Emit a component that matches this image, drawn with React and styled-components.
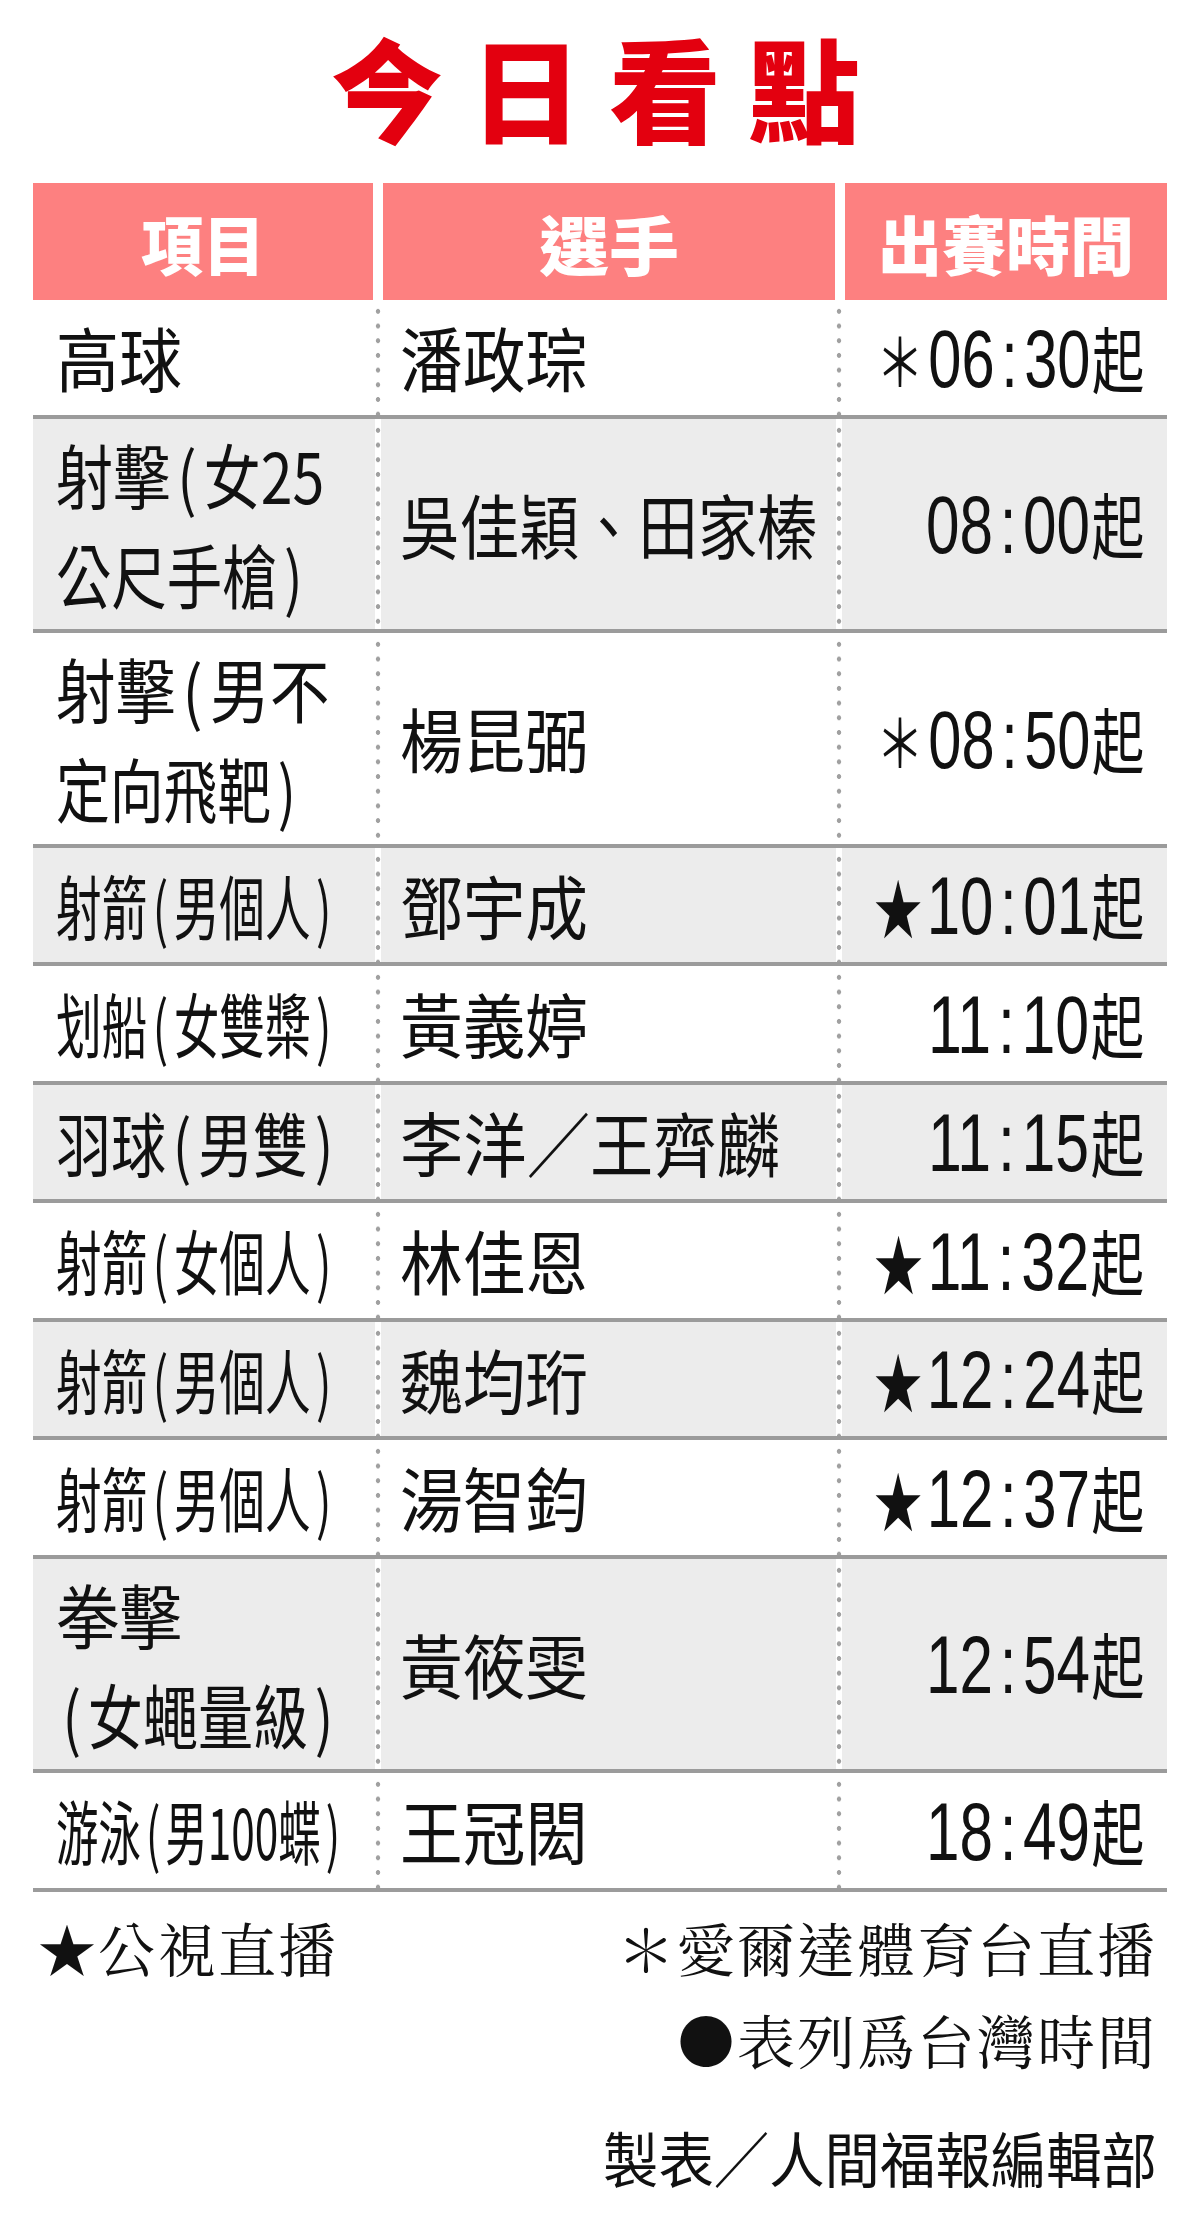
import React, { useLayoutEffect, useRef, useState } from 'react';
import styled, { createGlobalStyle } from 'styled-components';

const SANS = `"Noto Sans CJK TC", "Noto Sans CJK SC", sans-serif`;
const DIGITS = `"Liberation Sans", "Noto Sans CJK TC", "Noto Sans CJK SC", sans-serif`;
const KAI = `"AR PL UKai TW", "Noto Serif CJK TC", "Noto Sans CJK TC", serif`;

const GlobalStyle = createGlobalStyle`
  html, body {
    margin: 0;
    padding: 0;
    background: #fff;
  }
  body {
    font-family: ${SANS};
    color: #111;
  }
`;

const Page = styled.div`
  width: 1200px;
  min-height: 2216px;
  padding: 30px 33px 0;
  box-sizing: border-box;
  background: #fff;
`;

const Title = styled.h1`
  margin: 0 0 41px;
  padding-left: 18px;
  height: 112px;
  font-size: 112px;
  line-height: 112px;
  font-weight: 900;
  letter-spacing: 27px;
  text-align: center;
  color: #e3000f;
`;

const HeadRow = styled.div`
  display: grid;
  grid-template-columns: 340px 452px 322px;
  column-gap: 10px;
  height: 117px;
`;

const HeadCell = styled.div`
  display: flex;
  align-items: center;
  justify-content: center;
  background: #fd8080;
  color: #fff;
  font-size: 64px;
  line-height: 1;
  font-weight: 900;
`;

const Row = styled.div`
  display: grid;
  grid-template-columns: 342px 6px 455px 6px 325px;
  height: ${p => (p.$tall ? 210.5 : 114.5)}px;
  border-bottom: 4px solid #9b9b9b;
  background: ${p => (p.$shaded ? '#ececec' : '#fff')};
`;

const DotRule = styled.div`
  background-color: #fff;
  background-image: radial-gradient(circle, #a0a0a0 2px, rgba(160, 160, 160, 0) 2.6px);
  background-size: 6px 14.7px;
  background-repeat: repeat-y;
  background-position: center 4px;
`;

const Cell = styled.div`
  display: flex;
  flex-direction: column;
  justify-content: center;
  align-items: ${p => (p.$right ? 'flex-end' : 'flex-start')};
  padding: ${p => p.$pad};
  font-family: ${p => (p.$digits ? DIGITS : SANS)};
  font-size: ${p => (p.$digits ? 82 : 70)}px;
  line-height: 100px;
  color: #111;
`;

const Paren = styled.span`
  margin: 0 0.12em;
`;

const Mark = styled.span`
  font-family: ${SANS};
  font-size: 66px;
  margin-right: 6px;
`;

const Colon = styled.span`
  margin: 0 9px;
`;

const Suffix = styled.span`
  font-family: ${SANS};
  font-size: 72px;
  margin-left: 2px;
`;

const FitLine = styled.span`
  display: inline-block;
  white-space: nowrap;
  transform-origin: ${p => p.$origin} center;
`;

const Footer = styled.div`
  padding: 26px 10px 0 5px;
`;

const NoteRow = styled.div`
  display: flex;
  justify-content: ${p => p.$justify};
  align-items: center;
  height: 58px;
  margin-bottom: ${p => p.$gap}px;
  font-family: ${KAI};
  font-size: 58px;
  line-height: 58px;
  letter-spacing: 2px;
  color: #111;
`;

const Credit = styled.div`
  display: flex;
  justify-content: flex-end;
  height: 60px;
  font-size: 60px;
  line-height: 60px;
  color: #111;
`;

// scale a single line horizontally so it takes the width the print layout gave it
function Fit({ width, origin = 'left', children }) {
  const ref = useRef(null);
  const [scale, setScale] = useState(1);

  useLayoutEffect(() => {
    const measure = () => {
      const w = ref.current ? ref.current.offsetWidth : 0;
      if (w) setScale(width / w);
    };
    measure();
    if (document.fonts && document.fonts.ready) document.fonts.ready.then(measure);
  }, [width]);

  return (
    <FitLine ref={ref} $origin={origin} style={{ transform: `scaleX(${scale})` }}>
      {children}
    </FitLine>
  );
}

// parentheses in the print layout sit in their own wider slot
function EventText({ text }) {
  return text.split(/([()])/).map((part, i) =>
    part === '(' || part === ')' ? <Paren key={i}>{part}</Paren> : part
  );
}

function TimeText({ value }) {
  const mark = value[0] === '★' || value[0] === '＊' ? value[0] : '';
  const [hh, mm] = value.slice(mark.length, -1).split(':');
  return (
    <>
      {mark && <Mark>{mark}</Mark>}
      {hh}
      <Colon>:</Colon>
      {mm}
      <Suffix>起</Suffix>
    </>
  );
}

const rows = [
  { event: [['高球', 126]], player: ['潘政琮', 188], time: ['＊06:30起', 268] },
  { event: [['射擊(女25', 268], ['公尺手槍)', 253]], player: ['吳佳穎、田家榛', 417], time: ['08:00起', 218] },
  { event: [['射擊(男不', 273], ['定向飛靶)', 246]], player: ['楊昆弼', 188], time: ['＊08:50起', 268] },
  { event: [['射箭(男個人)', 281]], player: ['鄧宇成', 188], time: ['★10:01起', 270] },
  { event: [['划船(女雙槳)', 281]], player: ['黃義婷', 188], time: ['11:10起', 216] },
  { event: [['羽球(男雙)', 284]], player: ['李洋／王齊麟', 380], time: ['11:15起', 216] },
  { event: [['射箭(女個人)', 281]], player: ['林佳恩', 188], time: ['★11:32起', 270] },
  { event: [['射箭(男個人)', 281]], player: ['魏均珩', 188], time: ['★12:24起', 270] },
  { event: [['射箭(男個人)', 281]], player: ['湯智鈞', 188], time: ['★12:37起', 270] },
  { event: [['拳擊', 126], ['(女蠅量級)', 284]], player: ['黃筱雯', 188], time: ['12:54起', 218] },
  { event: [['游泳(男100蝶)', 289]], player: ['王冠閎', 188], time: ['18:49起', 218] },
];

export default function App() {
  return (
    <>
      <GlobalStyle />
      <Page>
        <Title>今日看點</Title>

        <HeadRow>
          <HeadCell>
            <Fit width={124} origin="center">項目</Fit>
          </HeadCell>
          <HeadCell>
            <Fit width={140} origin="center">選手</Fit>
          </HeadCell>
          <HeadCell>
            <Fit width={256} origin="center">出賽時間</Fit>
          </HeadCell>
        </HeadRow>

        {rows.map((r, i) => (
          <Row key={i} $shaded={i % 2 === 1} $tall={r.event.length > 1}>
            <Cell $pad="0 0 0 23px">
              {r.event.map(([text, w]) => (
                <Fit key={text} width={w}>
                  <EventText text={text} />
                </Fit>
              ))}
            </Cell>
            <DotRule />
            <Cell $pad="0 0 0 19px">
              <Fit width={r.player[1]}>{r.player[0]}</Fit>
            </Cell>
            <DotRule />
            <Cell $right $digits $pad="0 23px 0 0">
              <Fit width={r.time[1]} origin="right">
                <TimeText value={r.time[0]} />
              </Fit>
            </Cell>
          </Row>
        ))}

        <Footer>
          <NoteRow $justify="space-between" $gap={34}>
            <span>★公視直播</span>
            <span>＊愛爾達體育台直播</span>
          </NoteRow>
          <NoteRow $justify="flex-end" $gap={59}>
            <span>●表列爲台灣時間</span>
          </NoteRow>
          <Credit>
            <Fit width={554} origin="right">製表／人間福報編輯部</Fit>
          </Credit>
        </Footer>
      </Page>
    </>
  );
}
